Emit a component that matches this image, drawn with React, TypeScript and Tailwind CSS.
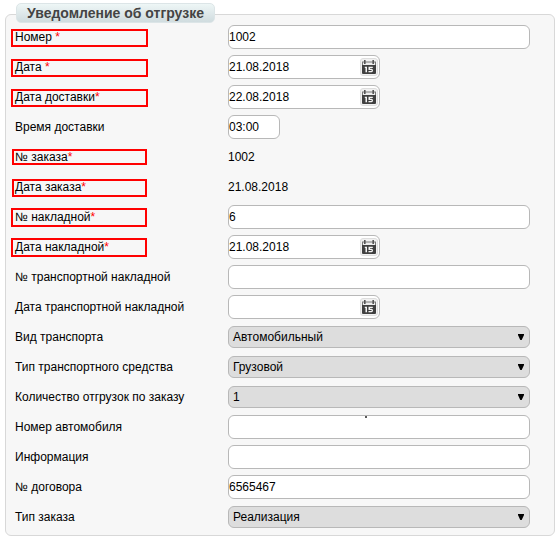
import React from "react";

type Row = {
  label: string;
  required?: boolean;
  kind: "text" | "date" | "time" | "plain" | "select";
  value?: string;
  frame?: string;
  speck?: boolean;
};

const rows: Row[] = [
  { label: "Номер ", required: true, kind: "text", value: "1002", frame: "left-[-4px] top-[7px] h-[18px] w-[137px]" },
  { label: "Дата ", required: true, kind: "date", value: "21.08.2018", frame: "left-[-4px] top-[7px] h-[18px] w-[137px]" },
  { label: "Дата доставки", required: true, kind: "date", value: "22.08.2018", frame: "left-[-4px] top-[7px] h-[18px] w-[137px]" },
  { label: "Время доставки", kind: "time", value: "03:00" },
  { label: "№ заказа", required: true, kind: "plain", value: "1002", frame: "left-[-3px] top-[7px] h-[16px] w-[135px]" },
  { label: "Дата заказа", required: true, kind: "plain", value: "21.08.2018", frame: "left-[-3px] top-[7px] h-[18px] w-[135px]" },
  { label: "№ накладной", required: true, kind: "text", value: "6", frame: "left-[-4px] top-[6px] h-[19px] w-[136px]" },
  { label: "Дата накладной", required: true, kind: "date", value: "21.08.2018", frame: "left-[-4px] top-[6px] h-[19px] w-[136px]" },
  { label: "№ транспортной накладной", kind: "text" },
  { label: "Дата транспортной накладной", kind: "date" },
  { label: "Вид транспорта", kind: "select", value: "Автомобильный" },
  { label: "Тип транспортного средства", kind: "select", value: "Грузовой" },
  { label: "Количество отгрузок по заказу", kind: "select", value: "1" },
  { label: "Номер автомобиля", kind: "text", speck: true },
  { label: "Информация", kind: "text" },
  { label: "№ договора", kind: "text", value: "6565467" },
  { label: "Тип заказа", kind: "select", value: "Реализация" },
];

function CalendarIcon() {
  return (
    <span className="flex h-[18px] w-[18px] items-center justify-center rounded-[3px] border border-[#dedede] bg-[#f1f1f1]">
      <svg width="14" height="14" viewBox="0 0 14 14">
        <path d="M0 1.5h14V6H0z" fill="#777" />
        <path d="M1 2.5h12V5H1z" fill="#ededed" />
        <path d="M0 5h14v8q0 1-1 1H1q-1 0-1-1z" fill="#404040" />
        <path d="M2 0h1.6v4H2zM10.4 0H12v4h-1.600z" fill="#555" />
        <path d="M2.800 6.700H5V12.300H3.500V8.100H2.800z" fill="#f4f4f4" />
        <path d="M6.500 6.700H10.800V8H8v.8h1.600q1.400 0 1.400 1.700t-1.500 1.800h-3V11h2.700q.5 0 .5-.5T9.200 10H6.500z" fill="#f4f4f4" />
      </svg>
    </span>
  );
}

const field = "flex h-6 items-center rounded-[6px] border border-[#b8b8b8] bg-white";

function Control({ row }: { row: Row }) {
  switch (row.kind) {
    case "plain":
      return <span>{row.value}</span>;
    case "time":
      return <div className={`${field} w-[52px]`}>{row.value}</div>;
    case "date":
      return (
        <div className={`${field} w-[152px] justify-between pr-px`}>
          <span>{row.value}</span>
          <CalendarIcon />
        </div>
      );
    case "select":
      return (
        <div className="flex h-[22px] w-[302px] items-center justify-between rounded-[6px] border border-[#b8b8b8] bg-[#ddd] pr-[5px] pl-1">
          <span>{row.value}</span>
          <svg width="6" height="6" viewBox="0 0 6 6">
            <path d="M0 0H6V1L3.700 6H2.300L0 1z" fill="#000" />
          </svg>
        </div>
      );
    default:
      return (
        <div className={`${field} relative w-[302px]`}>
          {row.value}
          {row.speck && <span className="absolute left-[136px] top-0 size-[2px] rounded-[1px] bg-[#222]" />}
        </div>
      );
  }
}

export default function App() {
  return (
    <div className="h-[538px] w-[559px] overflow-hidden bg-white pt-[14px] pl-[5px] font-['Liberation_Sans',Arial,sans-serif] text-[12px] leading-[14px] text-black">
      <section className="h-[522px] w-[550px] rounded-[6px] border border-[#d8d8d8] bg-[#f7f7f7] pl-[9px]">
        <h1 className="relative -mt-[12px] ml-px flex h-5 w-[199px] items-center justify-center rounded-[5px] border border-[#dce5e7] bg-linear-to-b from-[#eef6f6] to-[#d0dcdf] text-[14px] font-bold text-[#444]">
          Уведомление об отгрузке
        </h1>
        <div className="-mt-px">
          {rows.map((row) => (
            <div key={row.label} className="flex h-[30px] items-center">
              <div className="relative flex h-[30px] w-[213px] items-center">
                <span className="whitespace-pre">
                  {row.label}
                  {row.required && <span className="text-[#f00]">*</span>}
                </span>
                {row.frame && <span className={`absolute border-2 border-[#ff0000] ${row.frame}`} />}
              </div>
              <Control row={row} />
            </div>
          ))}
        </div>
      </section>
    </div>
  );
}
